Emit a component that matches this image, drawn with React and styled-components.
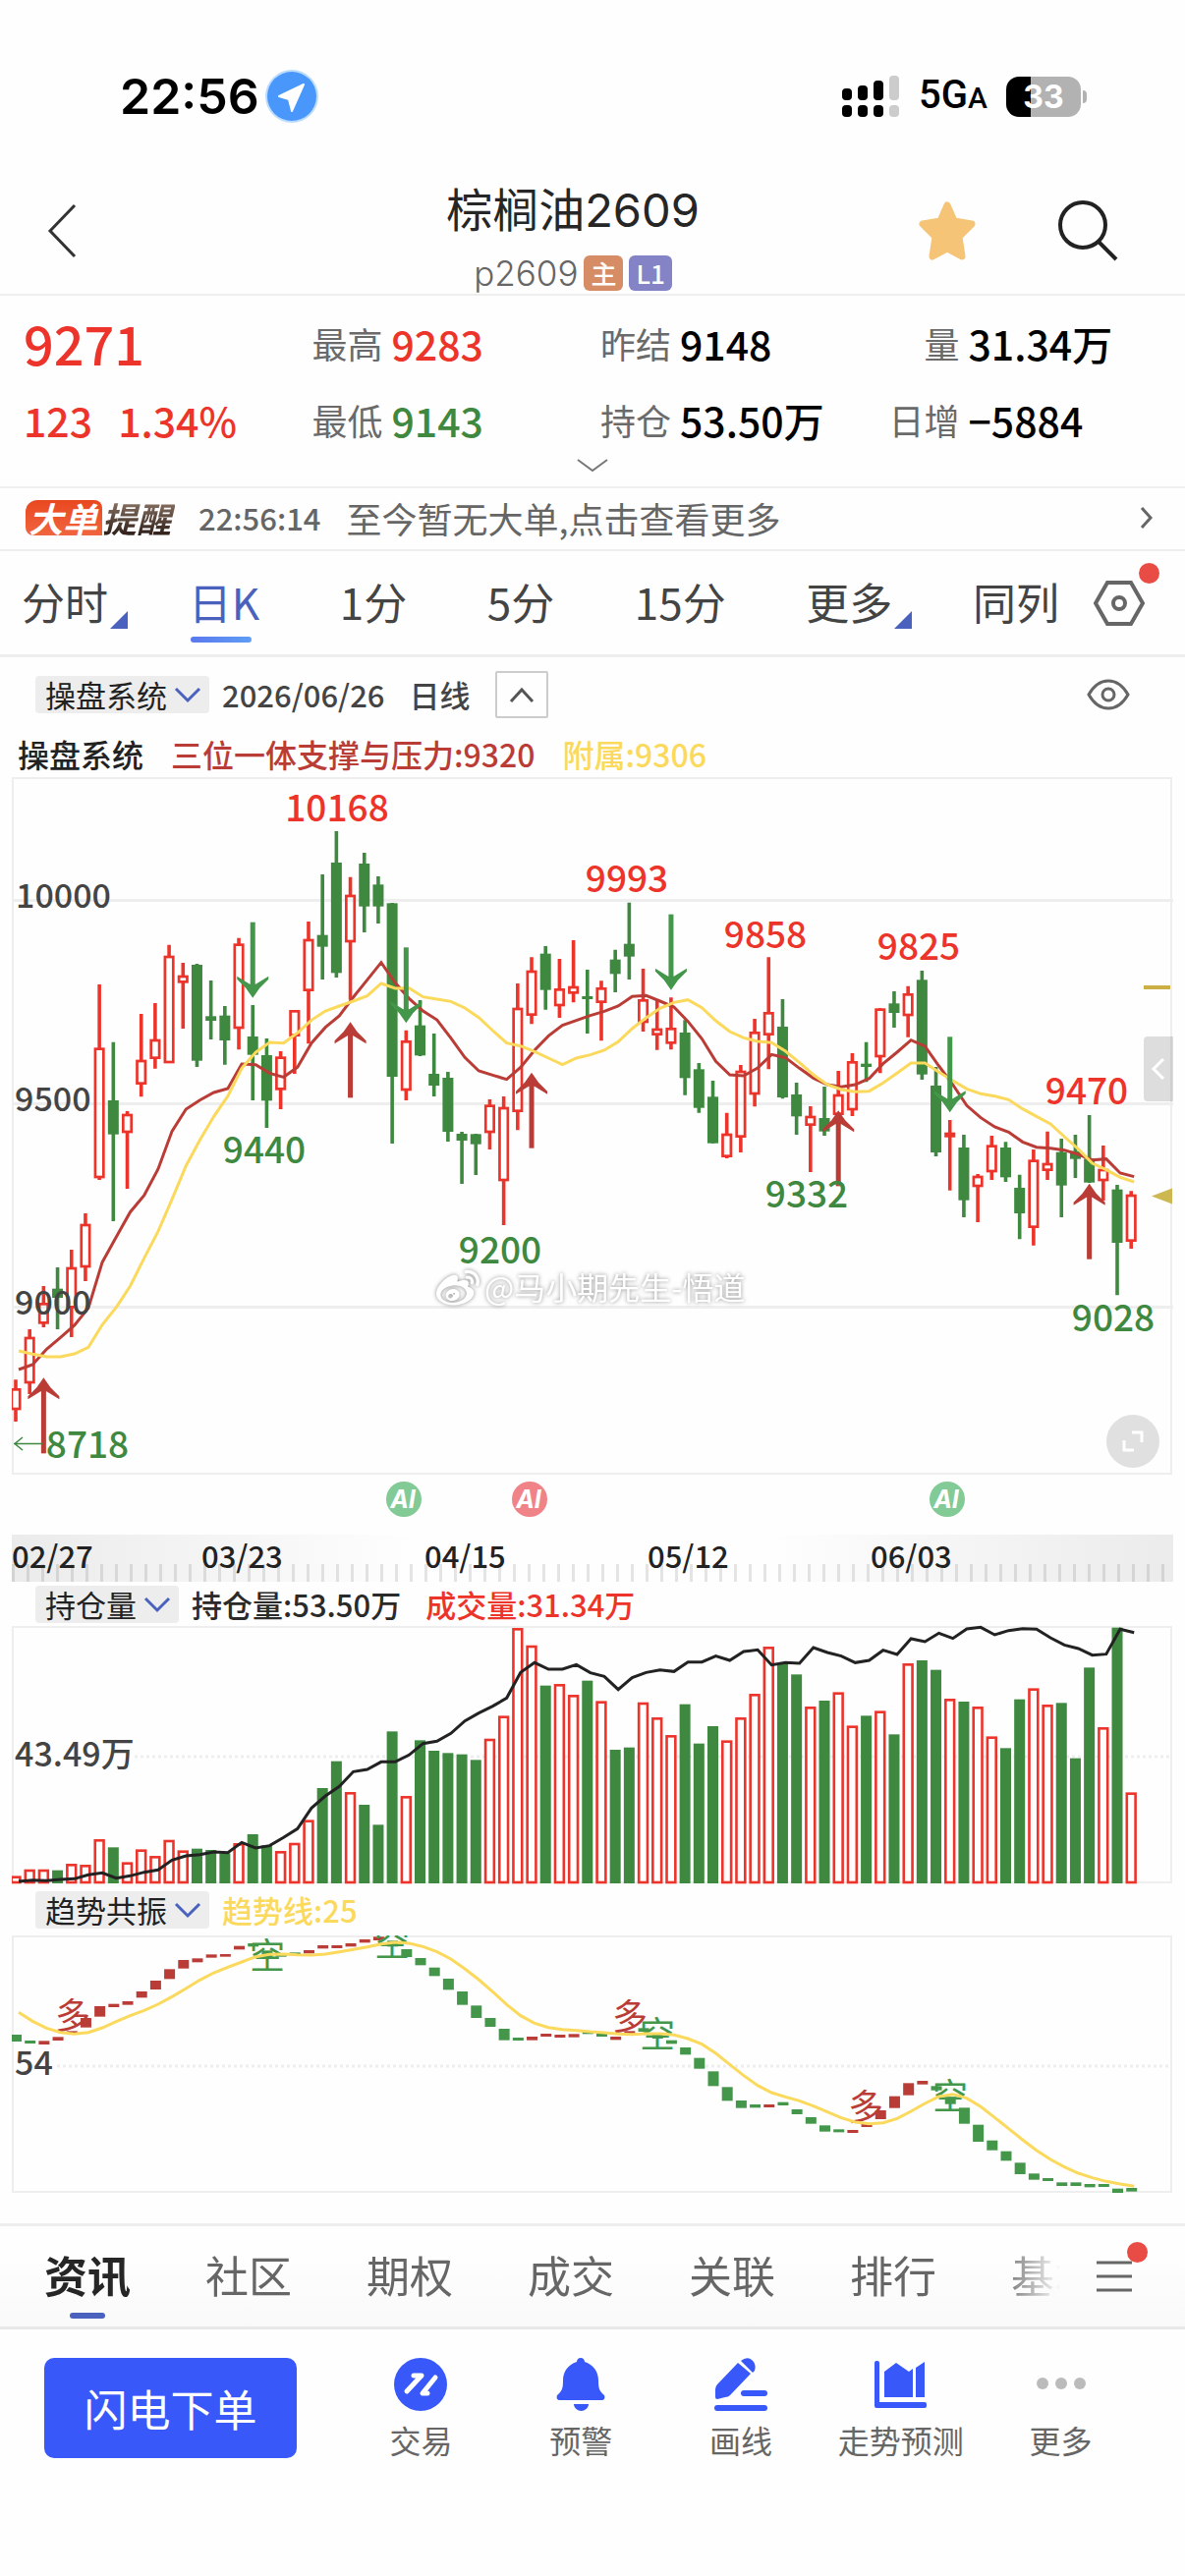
import React from 'react';
import styled, { createGlobalStyle } from 'styled-components';
import { FaWeibo } from 'react-icons/fa';

const RED = '#ec342b';
const GREEN = '#3e8840';
const DARK_RED = '#ba3c36';
const LIGHT_GREEN = '#43964a';
const YELLOW = '#fbd95c';
const BLUE = '#4a62bd';
const LINE = '#eeeeee';

// [direction, high, body top, body bottom, low], in thirds of a pixel
const candles = [
  ['u', 1876, 1903, 1968, 2004], ['u', 1722, 1746, 1887, 1920], ['u', 1590, 1642, 1705, 1716],
  ['d', 1533, 1598, 1626, 1722], ['u', 1479, 1533, 1657, 1746], ['u', 1368, 1401, 1533, 1575],
  ['u', 669, 863, 1260, 1266], ['d', 845, 1023, 1127, 1392], ['u', 1056, 1065, 1122, 1293],
  ['u', 759, 900, 974, 1012], ['u', 726, 837, 896, 926], ['u', 548, 582, 909, 909],
  ['u', 603, 642, 664, 804], ['d', 606, 609, 902, 921], ['d', 657, 766, 780, 837],
  ['d', 735, 764, 840, 914], ['u', 527, 545, 804, 868], ['d', 732, 828, 884, 1023],
  ['d', 834, 885, 1024, 1107], ['u', 873, 890, 991, 1050], ['u', 747, 748, 827, 942],
  ['u', 477, 531, 689, 850], ['d', 333, 518, 554, 654], ['d', 201, 297, 634, 648],
  ['u', 341, 396, 540, 716], ['d', 267, 300, 431, 510], ['d', 339, 364, 431, 483],
  ['d', 420, 421, 951, 1155], ['u', 809, 841, 993, 1023], ['d', 717, 794, 886, 888],
  ['d', 819, 942, 978, 1011], ['d', 936, 954, 1119, 1149], ['d', 1119, 1125, 1146, 1278],
  ['d', 1125, 1126, 1157, 1251], ['u', 1020, 1037, 1122, 1173], ['u', 1011, 1044, 1269, 1404],
  ['u', 666, 741, 1058, 1114], ['u', 586, 627, 764, 790], ['d', 552, 575, 686, 746],
  ['u', 591, 682, 735, 771], ['u', 534, 675, 697, 724], ['d', 624, 705, 713, 819],
  ['u', 658, 679, 725, 841], ['d', 563, 593, 637, 693], ['d', 419, 545, 584, 654],
  ['u', 621, 715, 786, 813], ['u', 717, 804, 824, 869], ['u', 709, 802, 850, 868],
  ['d', 778, 816, 955, 1007], ['d', 909, 928, 1046, 1061], ['d', 963, 1012, 1154, 1154],
  ['u', 1061, 1125, 1196, 1200], ['u', 915, 933, 1136, 1182], ['u', 774, 814, 1005, 1042],
  ['u', 586, 754, 824, 928], ['d', 714, 798, 1014, 1018], ['d', 969, 1005, 1072, 1128],
  ['u', 1041, 1071, 1100, 1242], ['d', 981, 1077, 1118, 1131], ['u', 933, 1005, 1067, 1067],
  ['u', 879, 904, 1053, 1071], ['d', 845, 911, 921, 967], ['u', 742, 743, 891, 940],
  ['d', 690, 727, 756, 801], ['u', 674, 697, 765, 830], ['d', 627, 655, 944, 960],
  ['d', 921, 978, 1182, 1194], ['u', 1083, 1122, 1135, 1298], ['d', 1128, 1167, 1328, 1380],
  ['u', 1248, 1254, 1287, 1395], ['u', 1131, 1160, 1242, 1266], ['d', 1150, 1167, 1258, 1272],
  ['d', 1250, 1290, 1368, 1447], ['u', 1173, 1205, 1412, 1466], ['u', 1118, 1215, 1238, 1266],
  ['d', 1140, 1181, 1283, 1380], ['d', 1128, 1178, 1202, 1260], ['d', 1068, 1201, 1274, 1275],
  ['u', 1161, 1233, 1269, 1329], ['d', 1281, 1295, 1458, 1618], ['u', 1300, 1311, 1454, 1476],
];

const supportLine = [
  1845, 1830, 1783, 1747, 1710, 1657, 1517, 1440, 1364, 1313, 1233, 1117, 1050, 1022, 999, 987,
  912, 914, 940, 952, 922, 848, 800, 765, 708, 655, 602, 664, 712, 750, 777, 833, 892, 933, 946,
  959, 922, 870, 826, 794, 779, 764, 751, 735, 706, 703, 720, 738, 782, 835, 904, 945, 948, 924,
  883, 893, 925, 955, 975, 982, 975, 956, 911, 876, 839, 858, 918, 975, 1039, 1076, 1104, 1120,
  1150, 1166, 1169, 1175, 1188, 1205, 1202, 1245, 1256,
];

const subLine = [
  1788, 1798, 1806, 1806, 1797, 1777, 1708, 1655, 1590, 1505, 1423, 1325, 1223, 1144, 1072, 1010,
  925, 876, 846, 848, 817, 778, 750, 735, 720, 704, 666, 681, 680, 707, 714, 721, 741, 770, 810,
  848, 857, 874, 894, 914, 894, 884, 870, 844, 804, 771, 742, 724, 716, 740, 780, 813, 832, 843,
  847, 873, 908, 945, 975, 990, 997, 995, 970, 940, 909, 909, 937, 963, 988, 1003, 1010, 1021,
  1049, 1072, 1095, 1134, 1172, 1215, 1235, 1258, 1272,
];

const volumes = [
  1232, 1212, 1212, 1214, 1195, 1198, 1120, 1144, 1190, 1151, 1171, 1122, 1154, 1148, 1152, 1162,
  1132, 1104, 1138, 1156, 1131, 1061, 963, 881, 976, 1014, 1075, 790, 988, 817, 849, 856, 860, 877,
  813, 743, 475, 528, 650, 646, 679, 635, 698, 846, 839, 702, 748, 802, 707, 827, 774, 818, 748,
  676, 532, 585, 616, 715, 696, 671, 773, 742, 728, 799, 583, 573, 602, 691, 699, 715, 806, 841,
  692, 659, 709, 703, 872, 595, 778, 473, 977,
];

const holdings = [
  1248, 1244, 1246, 1242, 1240, 1228, 1222, 1238, 1231, 1220, 1213, 1183, 1170, 1166, 1158, 1160,
  1129, 1146, 1139, 1114, 1087, 1024, 987, 958, 913, 906, 883, 883, 862, 827, 820, 796, 758, 734,
  713, 688, 610, 580, 600, 600, 586, 611, 622, 662, 626, 610, 602, 607, 578, 578, 560, 573, 546,
  541, 587, 580, 582, 534, 549, 560, 580, 573, 542, 555, 507, 516, 490, 506, 477, 472, 495, 482,
  476, 478, 504, 526, 537, 557, 554, 478, 488,
];

const trendBars = [
  ['d', 483, 504], ['d', 501, 510], ['u', 502, 513], ['u', 490, 501], ['u', 472, 480],
  ['u', 432, 461], ['u', 396, 428], ['u', 389, 399], ['u', 381, 392], ['u', 351, 370],
  ['u', 318, 345], ['u', 283, 313], ['u', 255, 281], ['u', 250, 262], ['u', 238, 248],
  ['u', 237, 245], ['u', 212, 223], ['d', 204, 214], ['d', 226, 246], ['d', 234, 245],
  ['d', 232, 241], ['u', 225, 235], ['u', 210, 220], ['u', 210, 219], ['u', 204, 214],
  ['u', 192, 202], ['u', 184, 195], ['d', 196, 214], ['d', 222, 246], ['d', 249, 271],
  ['d', 278, 304], ['d', 312, 346], ['d', 351, 392], ['d', 394, 432], ['d', 432, 459],
  ['d', 465, 500], ['d', 492, 501], ['u', 489, 500], ['u', 480, 489], ['u', 483, 492],
  ['u', 481, 491], ['d', 473, 481], ['d', 480, 489], ['u', 489, 499], ['u', 472, 482],
  ['d', 463, 474], ['d', 482, 495], ['d', 500, 511], ['d', 522, 544], ['d', 554, 587],
  ['d', 595, 640], ['d', 643, 685], ['d', 684, 707], ['d', 696, 706], ['u', 696, 705],
  ['d', 689, 699], ['d', 711, 726], ['d', 735, 755], ['d', 760, 779], ['d', 772, 781],
  ['u', 774, 783], ['u', 755, 765], ['u', 714, 741], ['u', 671, 707], ['u', 631, 668],
  ['u', 624, 635], ['d', 640, 653], ['d', 673, 695], ['d', 706, 755], ['d', 758, 810],
  ['d', 806, 836], ['d', 839, 868], ['d', 874, 909], ['d', 907, 926], ['d', 921, 930],
  ['d', 934, 945], ['d', 934, 945], ['d', 939, 949], ['d', 939, 948], ['d', 953, 966],
  ['d', 951, 962],
];

const trendLine = [
  415, 442, 463, 476, 481, 476, 462, 443, 425, 409, 390, 367, 342, 316, 294, 277, 261, 245, 238,
  237, 239, 240, 237, 230, 223, 215, 206, 201, 204, 214, 230, 252, 282, 315, 352, 391, 425, 448,
  461, 467, 470, 474, 477, 481, 482, 480, 480, 484, 495, 512, 540, 574, 608, 638, 660, 673, 685,
  701, 719, 737, 750, 755, 752, 739, 717, 693, 672, 665, 677, 703, 736, 770, 804, 836, 864, 887,
  906, 920, 931, 939, 946,
];

const extremes = [
  { text: '10168', x: 343, y: 57, color: RED },
  { text: '9993', x: 638, y: 129, color: RED },
  { text: '9858', x: 779, y: 186, color: RED },
  { text: '9825', x: 935, y: 198, color: RED },
  { text: '9470', x: 1106, y: 345, color: RED },
  { text: '9440', x: 269, y: 405, color: GREEN },
  { text: '9200', x: 509, y: 507, color: GREEN },
  { text: '9332', x: 821, y: 450, color: GREEN },
  { text: '9028', x: 1133, y: 576, color: GREEN },
  { text: '8718', x: 89, y: 705, color: GREEN },
];

const buys = [[2, 1870], [24, 784], [37, 938], [59, 1054], [77, 1277]];
const sells = [[17, 710], [28, 787], [47, 686], [67, 1060]];

const trendSigns = [
  { text: '多', x: 74, y: 155 },
  { text: '空', x: 272, y: 94 },
  { text: '空', x: 399, y: 81 },
  { text: '多', x: 641, y: 156 },
  { text: '空', x: 669, y: 174 },
  { text: '多', x: 881, y: 248 },
  { text: '空', x: 967, y: 237 },
];

const px = (v) => v / 3;
const colX = (i) => 16 + i * 14.19;
const toPoints = (list) => list.map((v, i) => `${colX(i) + 3},${px(v)}`).join(' ');

const GlobalStyle = createGlobalStyle`
  * {
    box-sizing: border-box;
  }
  body {
    margin: 0;
    background: #fefefe;
    color: #222;
    font-family: 'Noto Sans CJK SC', 'Noto Sans', sans-serif;
  }
  button, a {
    font: inherit;
    color: inherit;
    text-decoration: none;
  }
  button {
    padding: 0;
    border: 0;
    background: none;
    cursor: pointer;
  }
  svg {
    display: block;
  }
`;

const StatusBar = styled.div`
  display: flex;
  align-items: center;
  justify-content: space-between;
  padding: 62px 106px 37px 122px;
  color: #000;
`;

const StatusGroup = styled.div`
  display: flex;
  align-items: center;
  height: 72px;
  gap: ${(p) => p.$gap}px;
`;

const Clock = styled.span`
  font: 600 50px/72px Inter, sans-serif;
`;

const Network = styled.span`
  font: 500 40px/72px Roboto, sans-serif;

  small {
    font-size: 30px;
  }
`;

const Battery = styled.div`
  position: relative;
  width: 76px;
  height: 41px;
  border-radius: 13px;
  background: linear-gradient(to right, #000 33%, #b2b2b2 33%);
  color: #fff;
  font: 700 32px/41px Inter, sans-serif;
  text-align: center;

  &::after {
    content: '';
    position: absolute;
    top: 14px;
    right: -6px;
    width: 4px;
    height: 13px;
    border-radius: 0 4px 4px 0;
    background: #b2b2b2;
  }
`;

const Header = styled.header`
  display: grid;
  grid-template-columns: 1fr auto 1fr;
  align-items: center;
  height: 130px;
  padding: 0 68px 0 28px;
  border-bottom: 2px solid ${LINE};
`;

const BackButton = styled.button`
  justify-self: start;
  padding: 10px 20px;
`;

const TitleBlock = styled.div`
  display: flex;
  flex-direction: column;
  align-items: center;
  gap: 12px;
  padding-top: 10px;
`;

const Title = styled.h1`
  margin: 0;
  color: #262626;
  font: 400 47px/64px Inter, 'Noto Sans CJK SC', sans-serif;
`;

const SubTitle = styled.div`
  display: flex;
  align-items: center;
  gap: 6px;
  color: #666;
  font: 300 35px/40px Inter, sans-serif;
`;

const Badge = styled.span`
  padding: 0 7px;
  border-radius: 6px;
  background: ${(p) => p.$color};
  color: #fff;
  font: 500 26px/36px 'Noto Sans CJK SC', sans-serif;
`;

const HeaderActions = styled.div`
  display: flex;
  justify-self: end;
  gap: 81px;
`;

const Quote = styled.section`
  padding-top: 9px;
  border-bottom: 2px solid #f0f0f0;
`;

const QuoteGrid = styled.div`
  display: grid;
  grid-template-columns: repeat(4, 1fr);
  padding: 0 8px 0 24px;
`;

const Price = styled.div`
  color: ${RED};
  font-size: 54px;
  font-weight: 500;
  line-height: 78px;
`;

const Change = styled.div`
  display: flex;
  gap: 26px;
  color: ${RED};
  font-size: 41px;
  font-weight: 500;
  line-height: 78px;
`;

const Stat = styled.div`
  display: grid;
  grid-template-columns: 72px 1fr;
  gap: 9px;
  color: #6a6a6a;
  font-size: 36px;
  line-height: 78px;
  white-space: nowrap;

  span {
    text-align: right;
  }

  b {
    color: ${(p) => p.$color || '#000'};
    font-size: 41px;
    font-weight: 500;
  }
`;

const ExpandQuote = styled.button`
  display: flex;
  justify-content: center;
  width: 100%;
  height: 29px;
`;

const Alert = styled.a`
  display: flex;
  align-items: center;
  height: 64px;
  padding: 0 32px 3px 26px;
  border-bottom: 2px solid ${LINE};
  color: #666;
  font-size: 36px;
`;

const AlertLogo = styled.span`
  display: flex;
  align-items: center;
  margin-right: 24px;
  font-size: 35px;
  font-style: italic;
  font-weight: 700;
  line-height: 36px;

  em {
    padding: 0 5px 0 3px;
    border-radius: 12px 8px 0 8px;
    background: linear-gradient(#e9481f, #f0653f);
    color: #fff;
  }

  i {
    padding-right: 4px;
    background: linear-gradient(#8b7566, #2e1e18);
    background-clip: text;
    color: transparent;
  }
`;

const AlertTime = styled.time`
  margin-right: 26px;
  font-size: 31px;
  font-weight: 500;
`;

const AlertText = styled.span`
  flex: 1;
`;

const PeriodBar = styled.nav`
  display: flex;
  align-items: center;
  height: 108px;
  padding: 0 41px 0 22px;
  border-bottom: 3px solid ${LINE};
`;

const Periods = styled.div`
  flex: 1;
  display: flex;
  justify-content: space-between;
  margin-right: 35px;
`;

const Period = styled.button`
  position: relative;
  padding-bottom: 4px;
  color: ${(p) => (p.$active ? BLUE : '#444')};
  font-size: 44px;
  line-height: 100px;

  &::after {
    content: '';
    display: ${(p) => (p.$active || p.$menu ? 'block' : 'none')};
    position: absolute;
    ${(p) =>
      p.$active
        ? `left: 2px; right: 8px; bottom: 12px; height: 6px; border-radius: 3px;
           background: linear-gradient(to right, #5b78ee, #5e9df5);`
        : `right: -20px; bottom: 26px; border-left: 18px solid transparent;
           border-bottom: 18px solid ${BLUE};`}
  }
`;

const DotButton = styled.button`
  position: relative;

  &::after {
    content: '';
    position: absolute;
    top: ${(p) => p.$top}px;
    right: ${(p) => p.$right}px;
    width: 21px;
    height: 21px;
    border-radius: 50%;
    background: #e84c45;
  }
`;

const ChartBar = styled.div`
  display: flex;
  align-items: center;
  height: ${(p) => p.$height}px;
  padding: 0 56px 0 36px;
  font-size: 31px;
  line-height: 38px;
  white-space: nowrap;
`;

const Chip = styled.button`
  display: flex;
  align-items: center;
  gap: 7px;
  margin-right: 13px;
  padding: 0 8px 0 10px;
  border-radius: 4px;
  background: #ededed;
  color: #222;
  line-height: 38px;
`;

const Reading = styled.span`
  margin-right: 25px;
  color: ${(p) => p.$color || '#2a2a2a'};
  font-weight: 500;
`;

const FoldButton = styled.button`
  display: flex;
  align-items: center;
  justify-content: center;
  width: 54px;
  height: 48px;
  border: 2px solid #ccc;
  border-radius: 2px;
`;

const EyeButton = styled.button`
  margin-left: auto;
`;

const Legend = styled.div`
  display: flex;
  gap: 28px;
  height: 46px;
  padding: 0 18px;
  font-size: 32px;
  font-weight: 500;
  line-height: 44px;
  white-space: nowrap;

  span {
    color: ${DARK_RED};
  }
  span:last-child {
    color: ${YELLOW};
  }
`;

const ChartArea = styled.div`
  position: relative;
  padding: 0 12px;
`;

const ChartSvg = styled.svg`
  width: 100%;
  height: auto;
`;

const AxisText = styled.text`
  fill: #444;
  font-size: 34px;
  font-weight: 500;
`;

const PriceText = styled.text`
  font-size: 37px;
  font-weight: 500;
  text-anchor: middle;
`;

const SignText = styled.text`
  font-size: 36px;
  text-anchor: middle;
`;

const AiText = styled.text`
  fill: #fff;
  font: italic 700 25px Inter, sans-serif;
  text-anchor: middle;
`;

const Watermark = styled.g`
  fill: #fff;
  color: #fff;
  font-size: 32px;
  filter: drop-shadow(0 0 2px rgba(0, 0, 0, 0.45));
`;

const SideHandle = styled.button`
  position: absolute;
  top: 264px;
  right: 12px;
  display: flex;
  align-items: center;
  justify-content: center;
  width: 30px;
  height: 66px;
  border-radius: 4px 0 0 4px;
  background: rgba(0, 0, 0, 0.13);
`;

const FullScreen = styled.button`
  position: absolute;
  top: 649px;
  right: 26px;
  display: flex;
  align-items: center;
  justify-content: center;
  width: 54px;
  height: 54px;
  border-radius: 50%;
  background: #e0e0e0;
`;

const DateStrip = styled.div`
  display: grid;
  grid-template-columns: 193px repeat(4, 227px);
  height: 48px;
  margin: 0 12px 2px;
  background:
    repeating-linear-gradient(to right, rgba(0, 0, 0, 0.1) 0 3px, transparent 3px 15px) 0 100% / 100% 18px no-repeat,
    linear-gradient(to right, #ebebeb, #fefefe 35%, #fefefe 65%, #ebebeb);
  font-size: 31px;
  font-weight: 500;
  line-height: 41px;
`;

const InfoTabs = styled.nav`
  display: flex;
  align-items: center;
  height: 108px;
  margin-top: 29px;
  padding: 0 52px 0 45px;
  border-top: 3px solid ${LINE};
  border-bottom: 3px solid #e8e8e8;
  background: linear-gradient(#fefefe 30%, #f9f9f9);
`;

const InfoList = styled.div`
  flex: 1;
  display: flex;
  gap: 76px;
  min-width: 0;
  margin-right: 24px;
  overflow: hidden;
  mask-image: linear-gradient(to right, #000 93%, transparent 99%);
`;

const InfoTab = styled.a`
  position: relative;
  flex: none;
  padding-bottom: 4px;
  color: ${(p) => (p.$active ? '#262626' : '#666')};
  font-size: 44px;
  font-weight: ${(p) => (p.$active ? 700 : 400)};
  line-height: 98px;

  &::after {
    content: '';
    display: ${(p) => (p.$active ? 'block' : 'none')};
    position: absolute;
    left: 26px;
    bottom: 8px;
    width: 36px;
    height: 6px;
    border-radius: 3px;
    background: ${BLUE};
  }
`;

const Toolbar = styled.footer`
  display: flex;
  padding: 29px 45px 119px;
`;

const OrderButton = styled.button`
  width: 257px;
  height: 102px;
  margin-right: 45px;
  border-radius: 10px;
  background: #3858f9;
  color: #fff;
  font-size: 44px;
`;

const Tools = styled.div`
  flex: 1;
  display: grid;
  grid-template-columns: repeat(5, 1fr);
`;

const Tool = styled.button`
  display: flex;
  flex-direction: column;
  align-items: center;
  gap: 9px;
  color: #666;
  font-size: 32px;
  line-height: 40px;
  white-space: nowrap;
`;

function Chevron({ w, h, d, color, width = 3 }) {
  return (
    <svg width={w} height={h} viewBox={`0 0 ${w} ${h}`} fill="none" stroke={color} strokeWidth={width}>
      <path d={d} />
    </svg>
  );
}

const DownChevron = () => <Chevron w={28} h={18} d="M2 3l12 12L26 3" color={BLUE} />;

function LocationIcon() {
  return (
    <svg width="54" height="54" viewBox="0 0 54 54">
      <circle cx="27" cy="27" r="27" fill="#bcdcfd" />
      <circle cx="27" cy="27" r="25" fill="#4a97fb" />
      <path d="M39 15L14 27l10 3 3 12z" fill="#fff" stroke="#fff" strokeWidth="2" strokeLinejoin="round" />
    </svg>
  );
}

function SignalIcon() {
  const tops = [13, 10, 5, 0];
  return (
    <svg width="59" height="42" viewBox="0 0 59 42">
      {tops.map((top, i) => (
        <g key={top} fill={i === 3 ? '#ccc' : '#000'}>
          <rect x={i * 16} y={top} width="10" height={25 - top} rx="4" />
          <rect x={i * 16} y="30" width="10" height="12" rx="4" />
        </g>
      ))}
    </svg>
  );
}

function StarIcon() {
  return (
    <svg width="62" height="62" viewBox="0 0 62 62">
      <path
        d="M31 5l7 16 18 3-13 13 3 20-15-8-15 8 3-20L6 24l18-3z"
        fill="#f6c477"
        stroke="#f6c477"
        strokeWidth="7"
        strokeLinejoin="round"
      />
    </svg>
  );
}

function SearchIcon() {
  return (
    <svg width="62" height="62" viewBox="0 0 62 62" fill="none" stroke="#222" strokeWidth="4">
      <circle cx="26" cy="25" r="23" />
      <path d="M42 42l18 18" />
    </svg>
  );
}

function HexIcon() {
  return (
    <svg width="52" height="46" viewBox="0 0 52 46" fill="none" stroke="#666" strokeWidth="4">
      <path d="M14 2h24l12 21-12 21H14L2 23z" />
      <circle cx="26" cy="23" r="6" />
    </svg>
  );
}

function EyeIcon() {
  return (
    <svg width="44" height="32" viewBox="0 0 44 32" fill="none" stroke="#666" strokeWidth="3">
      <path d="M2 16Q10 2 22 2t20 14Q34 30 22 30T2 16z" />
      <circle cx="22" cy="16" r="6" />
    </svg>
  );
}

function TradeIcon() {
  return (
    <svg width="54" height="54" viewBox="0 0 54 54">
      <circle cx="27" cy="27" r="27" fill="#3858f9" />
      <g fill="none" stroke="#fff" strokeWidth="5" strokeLinecap="round" strokeLinejoin="round">
        <path d="M20 18h8L13 34" />
        <path d="M42 20L29 36h5" />
      </g>
    </svg>
  );
}

function BellIcon() {
  return (
    <svg width="54" height="54" viewBox="0 0 54 54" fill="#3858f9">
      <path d="M27 0c2.500 0 4 1.700 4 4 9 3 14 10 14 19 0 8 1 11 6 15 1 3 0 5-3 5H6c-3 0-4-2-3-5 5-4 6-7 6-15 0-9 5-16 14-19 0-2.300 1.500-4 4-4z" />
      <path d="M20 47h15c0 4-4 7-7.500 7S20 51 20 47z" />
    </svg>
  );
}

function PenIcon() {
  return (
    <svg width="54" height="54" viewBox="0 0 54 54" fill="#3858f9">
      <path d="M24 5l13 11-21 22q-2 2-5 2l-8 2q-2 0-2-2V32q0-3 2-5z" />
      <path d="M27 3q6-5 11-1t3 11l-2 2z" />
      <rect x="27" y="33" width="27" height="6" rx="3" />
      <rect x="0" y="48" width="54" height="6" rx="3" />
    </svg>
  );
}

function ForecastIcon() {
  return (
    <svg width="54" height="54" viewBox="0 0 54 54" fill="#3858f9">
      <path d="M0 5q0-2 2-2h1q2 0 2 2v40h46q2 0 2 2v2q0 2-2 2H2q-2 0-2-2z" />
      <path d="M10 14l12-9 13 9 4-3v29H10z" />
      <path d="M42 10l9-6v36h-9z" />
    </svg>
  );
}

function MoreIcon() {
  return (
    <svg width="54" height="54" viewBox="0 0 54 54" fill="#bbb">
      <circle cx="8" cy="26" r="6" />
      <circle cx="27" cy="26" r="6" />
      <circle cx="46" cy="26" r="6" />
    </svg>
  );
}

function PriceChart() {
  return (
    <ChartSvg viewBox="12 12 1182 771">
      <rect x="13" y="13" width="1179" height="708" fill="none" stroke={LINE} strokeWidth="2" />
      {[137, 344, 551].map((y) => (
        <path key={y} d={`M13 ${y}.5H1194`} stroke={LINE} strokeWidth="3" />
      ))}
      {candles.map(([dir, high, top, bottom, low], i) => {
        const color = dir === 'u' ? RED : GREEN;
        const x = colX(i);
        const height = Math.max(px(bottom - top), 3);
        return (
          <g key={i} stroke={color}>
            <path d={`M${x} ${px(high)}V${px(top) + 1}M${x} ${px(bottom) - 1}V${px(low)}`} strokeWidth="3.600" />
            {dir === 'u' ? (
              <rect x={x - 4.2} y={px(top) + 1} width="8.4" height={height - 2} fill="none" strokeWidth="2.700" />
            ) : (
              <rect x={x - 5.5} y={px(top)} width="11" height={height} fill={color} stroke="none" />
            )}
          </g>
        );
      })}
      <polyline points={toPoints(supportLine)} fill="none" stroke={DARK_RED} strokeWidth="3" />
      <polyline points={toPoints(subLine)} fill="none" stroke={YELLOW} strokeWidth="3" />
      <AxisText x="16" y="145">10000</AxisText>
      <AxisText x="15" y="352">9500</AxisText>
      <AxisText x="15" y="559">9000</AxisText>
      {buys.map(([i, tip]) => (
        <g key={i} transform={`translate(${colX(i)} ${px(tip)})`} fill={DARK_RED}>
          <rect x="-2.500" y="8" width="5" height="69" />
          <path d="M0 0L7 10L16 19V22L3 14H-3L-16 22V19L-7 10z" />
        </g>
      ))}
      {sells.map(([i, tip]) => (
        <g key={i} transform={`translate(${colX(i)} ${px(tip)})`} fill={LIGHT_GREEN}>
          <rect x="-2.500" y="-77" width="5" height="69" />
          <path d="M0 0L7 -10L16 -19V-22L3 -14H-3L-16 -22V-19L-7 -10z" />
        </g>
      ))}
      <path d="M43 690.500H14M23 684l-8 6.500 8 6.500" fill="none" stroke={GREEN} strokeWidth="1.500" />
      {extremes.map((e) => (
        <PriceText key={e.text} x={e.x} y={e.y} fill={e.color}>{e.text}</PriceText>
      ))}
      <rect x="1164" y="224" width="27" height="4" fill="#cdb045" />
      <path d="M1172 438.500l21-8v16z" fill="#cdb750" />
      <Watermark>
        <FaWeibo x="444" y="511" size="44" />
        <text x="493" y="544">@马小期先生-悟道</text>
      </Watermark>
      {[[411, '#82ca96'], [539, '#ef8388'], [964, '#82ca96']].map(([x, color]) => (
        <g key={x}>
          <circle cx={x} cy="747" r="18" fill={color} />
          <AiText x={x - 1} y="756">AI</AiText>
        </g>
      ))}
    </ChartSvg>
  );
}

function VolumeChart() {
  return (
    <ChartSvg viewBox="12 155 1182 264">
      <rect x="13" y="157" width="1179" height="260" fill="none" stroke={LINE} strokeWidth="2" />
      <path d="M137 289H1192" stroke={LINE} strokeWidth="3" strokeDasharray="3 3" />
      {volumes.map((v, i) =>
        candles[i][0] === 'u' ? (
          <rect key={i} x={colX(i) - 4.4} y={px(v) + 1} width="8.8" height={416 - px(v)} fill="#fefefe" stroke={RED} strokeWidth="2.600" />
        ) : (
          <rect key={i} x={colX(i) - 5.5} y={px(v)} width="11" height={418 - px(v)} fill={GREEN} />
        )
      )}
      <polyline points={toPoints(holdings)} fill="none" stroke="#222" strokeWidth="3" />
      <AxisText x="15" y="299">43.49万</AxisText>
    </ChartSvg>
  );
}

function TrendChart() {
  return (
    <ChartSvg viewBox="12 60 1182 264">
      <rect x="13" y="61" width="1179" height="260" fill="none" stroke={LINE} strokeWidth="2" />
      <path d="M58 193H1192" stroke={LINE} strokeWidth="3" strokeDasharray="3 3" />
      {trendBars.map(([dir, top, bottom], i) => (
        <rect
          key={i}
          x={colX(i) - 5}
          y={px(top)}
          width="11"
          height={px(bottom - top)}
          fill={dir === 'u' ? DARK_RED : LIGHT_GREEN}
        />
      ))}
      {trendSigns.map((s) => (
        <SignText key={s.x} x={s.x} y={s.y} fill={s.text === '多' ? DARK_RED : LIGHT_GREEN}>{s.text}</SignText>
      ))}
      <polyline points={toPoints(trendLine)} fill="none" stroke={YELLOW} strokeWidth="3" />
      <AxisText x="15" y="202">54</AxisText>
    </ChartSvg>
  );
}

const tools = [
  ['交易', TradeIcon],
  ['预警', BellIcon],
  ['画线', PenIcon],
  ['走势预测', ForecastIcon],
  ['更多', MoreIcon],
];

export default function App() {
  return (
    <>
      <GlobalStyle />
      <StatusBar>
        <StatusGroup $gap={6}>
          <Clock>22:56</Clock>
          <LocationIcon />
        </StatusGroup>
        <StatusGroup $gap={19}>
          <SignalIcon />
          <Network>5G<small>A</small></Network>
          <Battery>33</Battery>
        </StatusGroup>
      </StatusBar>

      <Header>
        <BackButton aria-label="返回">
          <Chevron w={30} h={56} d="M28 2L3 28l25 26" color="#333" />
        </BackButton>
        <TitleBlock>
          <Title>棕榈油2609</Title>
          <SubTitle>
            p2609
            <Badge $color="#d68d66">主</Badge>
            <Badge $color="#8383c6">L1</Badge>
          </SubTitle>
        </TitleBlock>
        <HeaderActions>
          <button aria-label="收藏"><StarIcon /></button>
          <button aria-label="搜索"><SearchIcon /></button>
        </HeaderActions>
      </Header>

      <Quote>
        <QuoteGrid>
          <Price>9271</Price>
          <Stat $color={RED}><span>最高</span><b>9283</b></Stat>
          <Stat><span>昨结</span><b>9148</b></Stat>
          <Stat><span>量</span><b>31.34万</b></Stat>
          <Change><span>123</span><span>1.34%</span></Change>
          <Stat $color={GREEN}><span>最低</span><b>9143</b></Stat>
          <Stat><span>持仓</span><b>53.50万</b></Stat>
          <Stat><span>日增</span><b>−5884</b></Stat>
        </QuoteGrid>
        <ExpandQuote aria-label="展开">
          <Chevron w={32} h={16} d="M1 2l15 11L31 2" color="#777" width={2} />
        </ExpandQuote>
      </Quote>

      <Alert href="#alert">
        <AlertLogo><em>大单</em><i>提醒</i></AlertLogo>
        <AlertTime>22:56:14</AlertTime>
        <AlertText>至今暂无大单,点击查看更多</AlertText>
        <Chevron w={14} h={24} d="M2 2l9 10-9 10" color="#666" />
      </Alert>

      <PeriodBar>
        <Periods>
          <Period $menu>分时</Period>
          <Period $active>日K</Period>
          <Period>1分</Period>
          <Period>5分</Period>
          <Period>15分</Period>
          <Period $menu>更多</Period>
          <Period>同列</Period>
        </Periods>
        <DotButton $top={-18} $right={-15} aria-label="设置"><HexIcon /></DotButton>
      </PeriodBar>

      <ChartBar $height={76}>
        <Chip>操盘系统<DownChevron /></Chip>
        <Reading $color="#444">2026/06/26</Reading>
        <Reading $color="#444">日线</Reading>
        <FoldButton aria-label="收起">
          <Chevron w={28} h={18} d="M3 16L14 4l11 12" color="#555" />
        </FoldButton>
        <EyeButton aria-label="显示"><EyeIcon /></EyeButton>
      </ChartBar>
      <Legend>
        操盘系统
        <span>三位一体支撑与压力:9320</span>
        <span>附属:9306</span>
      </Legend>
      <ChartArea>
        <PriceChart />
        <SideHandle aria-label="侧栏">
          <Chevron w={16} h={24} d="M13 2L3 12l10 10" color="#fff" />
        </SideHandle>
        <FullScreen aria-label="全屏">
          <svg width="22" height="22" viewBox="0 0 22 22" fill="none" stroke="#fff" strokeWidth="3">
            <path d="M10 2h10v10M2 10v10h10" />
          </svg>
        </FullScreen>
      </ChartArea>
      <DateStrip>
        <span>02/27</span>
        <span>03/23</span>
        <span>04/15</span>
        <span>05/12</span>
        <span>06/03</span>
      </DateStrip>

      <ChartBar $height={42}>
        <Chip>持仓量<DownChevron /></Chip>
        <Reading>持仓量:53.50万</Reading>
        <Reading $color={RED}>成交量:31.34万</Reading>
      </ChartBar>
      <ChartArea>
        <VolumeChart />
      </ChartArea>

      <ChartBar $height={52}>
        <Chip>趋势共振<DownChevron /></Chip>
        <Reading $color={YELLOW}>趋势线:25</Reading>
      </ChartBar>
      <ChartArea>
        <TrendChart />
      </ChartArea>

      <InfoTabs>
        <InfoList>
          {['资讯', '社区', '期权', '成交', '关联', '排行', '基本'].map((name, i) => (
            <InfoTab key={name} href={`#${name}`} $active={i === 0}>{name}</InfoTab>
          ))}
        </InfoList>
        <DotButton $top={-18} $right={-14} aria-label="菜单">
          <svg width="40" height="34" viewBox="0 0 40 34" stroke="#666" strokeWidth="3">
            <path d="M2 3h36M2 17h36M2 31h36" />
          </svg>
        </DotButton>
      </InfoTabs>

      <Toolbar>
        <OrderButton>闪电下单</OrderButton>
        <Tools>
          {tools.map(([name, Icon]) => (
            <Tool key={name}><Icon />{name}</Tool>
          ))}
        </Tools>
      </Toolbar>
    </>
  );
}
